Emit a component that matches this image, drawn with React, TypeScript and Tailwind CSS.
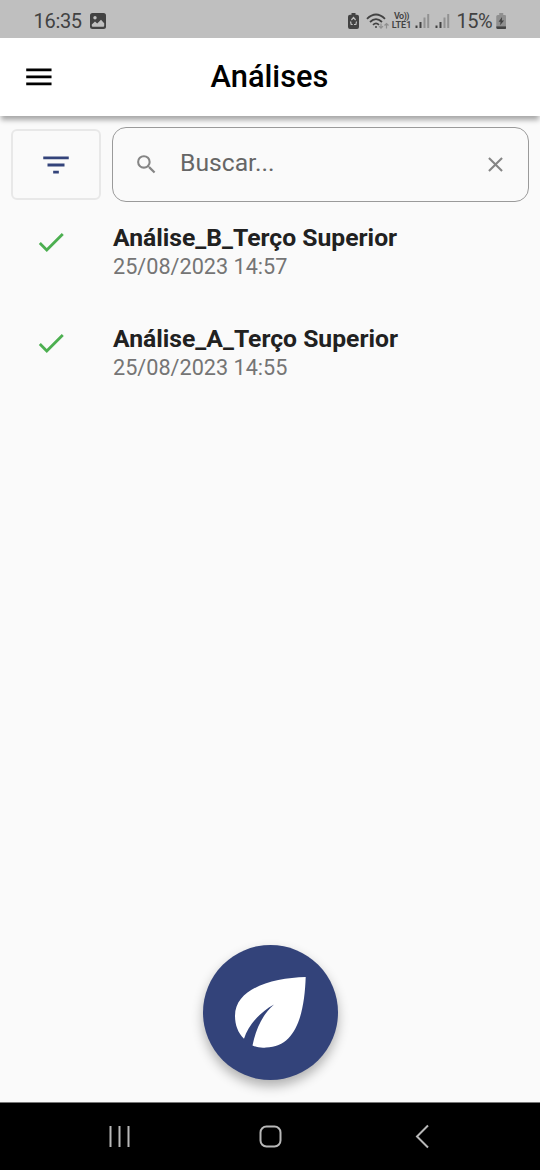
import React from 'react';

type Analysis = { name: string; date: string };

const analyses: Analysis[] = [
  { name: 'Análise_B_Terço Superior', date: '25/08/2023 14:57' },
  { name: 'Análise_A_Terço Superior', date: '25/08/2023 14:55' },
];

function Icon({ d, className }: { d: string; className: string }) {
  return (
    <svg viewBox="0 0 24 24" fill="currentColor" className={`shrink-0 ${className}`}>
      <path d={d} />
    </svg>
  );
}

function Signal() {
  return (
    <svg viewBox="0 0 15 16" className="h-4 w-[15px] shrink-0">
      <path d="M.5 12.5h2V15h-2z" fill="#424242" />
      <path d="M4.5 9h2v6h-2z" fill="#424242" />
      <path d="M8.5 4.5h2V15h-2zM12.2 1h2v14h-2z" fill="#929292" />
    </svg>
  );
}

function StatusBar() {
  return (
    <div className="flex h-[38px] items-center bg-[#bfbfbf] pb-[1px] pl-[33.5px] pt-[5px] text-[#424242]">
      <span className="w-[50px] text-[20px] leading-none tracking-[-0.3px]">16:35</span>
      <svg viewBox="0 0 16 16" className="ml-[6px] h-4 w-4">
        <rect width="16" height="16" rx="2.5" fill="#424242" />
        <path d="M1.8 11.5 5 8.4l2.2 2.1L11 6.8l3.2 3.4v2.6q0 1-1 1H2.8q-1 0-1-1z" fill="#bfbfbf" />
        <circle cx="5" cy="4.7" r="1.7" fill="#bfbfbf" />
      </svg>
      <svg viewBox="0 0 11 16" className="ml-[242px] h-4 w-[11px] shrink-0">
        <path d="M3.5 0h4v1.7H9q2 0 2 2V14q0 2-2 2H2q-2 0-2-2V3.7q0-2 2-2h1.5z" fill="#424242" />
        <path d="M3.4 7 5.5 4.5 7.6 7M8.5 8.5 7.9 11.5H6M2.5 8.5l.7 3h1.5" fill="none" stroke="#bfbfbf" strokeWidth="1.2" />
      </svg>
      <svg viewBox="0 0 23 17" className="ml-[7px] h-[17px] w-[23px] shrink-0" fill="none" stroke="#424242" strokeWidth="1.8">
        <path d="M1 5.8Q10 -2.8 19 5.8M4 9Q10 3.3 16 9M7 11.8Q10 9 13 11.8" />
        <circle cx="10" cy="14" r="1" fill="#424242" stroke="none" />
        <path d="M15 10.5v4.5m-2-1.8 2 2 2-2M20.5 15.5V10.5m-2 2 2-2 2 2" stroke="#8f8f8f" strokeWidth="1.2" />
      </svg>
      <div className="ml-[3px] flex w-[20px] shrink-0 flex-col items-center whitespace-nowrap text-[9px] font-semibold leading-[9px]">
        <span className="tracking-[-0.5px]">Vo))</span>
        <span>LTE1</span>
      </div>
      <div className="ml-[3px] flex gap-[5px]">
        <Signal />
        <Signal />
      </div>
      <span className="ml-[7px] w-[37px] text-[20px] leading-none tracking-[-0.5px]">15%</span>
      <svg viewBox="0 0 10 16" className="ml-[2px] h-4 w-[10.5px] shrink-0">
        <path d="M3 0h4v2h1.5Q10 2 10 3.5V13H0V3.5Q0 2 1.5 2H3z" fill="#8f8f8f" />
        <path d="M0 13.3h10v1.2q0 1.5-1.5 1.5h-7Q0 16 0 14.5z" fill="#424242" />
        <path d="M5.8 4 2.3 8.8h2L3.9 12.3 7.8 7.4H5.6z" fill="#424242" />
      </svg>
    </div>
  );
}

export default function App() {
  return (
    <div className="flex h-[1170px] w-[540px] flex-col overflow-hidden bg-[#fafafa] font-['Roboto',sans-serif]">
      <StatusBar />
      <header className="z-10 grid h-[78px] grid-cols-[78px_1fr_78px] items-center bg-white shadow-[0_5px_5px_-1px_rgba(0,0,0,0.33)]">
        <Icon d="M3 18h18v-2H3v2zm0-5h18v-2H3v2zm0-7v2h18V6H3z" className="ml-[22.4px] size-[33.75px] text-black" />
        <h1 className="pb-[1px] pr-[1px] text-center text-[30.8px] font-medium leading-9 text-black">Análises</h1>
      </header>
      <main className="flex flex-1 flex-col">
        <div className="flex gap-[11px] pl-[11px] pt-[11px]">
          <button className="mt-[2px] flex h-[71px] w-[90px] items-center justify-center rounded-[6px] border-2 border-[#e8e8e8]">
            <Icon d="M10 18h4v-2h-4v2zM3 6v2h18V6H3zm3 7h12v-2H6v2z" className="size-[34px] text-[#33437a]" />
          </button>
          <div className="flex h-[75px] w-[416.5px] items-center rounded-[14px] border-[1.5px] border-[#9a9a9a] pl-[20.5px] pr-[20px] text-[#858585]">
            <Icon d="M15.5 14h-.79l-.28-.27A6.471 6.471 0 0 0 16 9.5 6.5 6.5 0 1 0 9.5 16c1.61 0 3.09-.59 4.23-1.57l.27.28v.79l5 4.99L20.49 19l-4.99-5zm-6 0C7.01 14 5 11.99 5 9.5S7.01 5 9.5 5 14 7.01 14 9.5 11.99 14 9.5 14z" className="size-[25px]" />
            <span className="mb-[3px] ml-[21.5px] flex-1 text-[24.7px] leading-8 text-[#666]">Buscar...</span>
            <Icon d="M19 6.41 17.59 5 12 10.59 6.41 5 5 6.41 10.59 12 5 17.59 6.41 19 12 13.41 17.59 19 19 17.59 13.41 12z" className="size-[25px]" />
          </div>
        </div>
        <ul className="mt-[22px] flex flex-col gap-[43px]">
          {analyses.map((item) => (
            <li key={item.name} className="flex h-[58px]">
              <Icon d="M9 16.17 4.83 12l-1.42 1.41L9 19 21 7l-1.41-1.41z" className="ml-[34px] mt-[1px] size-[34px] text-[#4caf50]" />
              <div className="ml-[45px] flex flex-col whitespace-nowrap">
                <span className="text-[24.7px] font-bold leading-[28px] text-[#212121]">{item.name}</span>
                <span className="text-[21.65px] leading-[30px] text-[#757575]">{item.date}</span>
              </div>
            </li>
          ))}
        </ul>
        <button className="mx-auto mb-[22px] mt-auto size-[135px] rounded-full bg-[#33437a] shadow-[0_6px_12px_rgba(0,0,0,0.3)]">
          <svg viewBox="0 0 135 135" className="size-full" fill="white">
            <path d="M102.7 32C70 33 32 43 32 71C32 80 35 88 41 93.7C45 82 54 69 71 59.5C60 69 53 83 49.5 100.5C54 102.5 59 103 63 102.5C94 102 101.5 67 102.7 32Z" />
          </svg>
        </button>
      </main>
      <nav className="flex h-[68px] items-center border-t border-[#777] bg-black">
        <svg viewBox="0 0 540 67" className="h-[67px] w-full" fill="none" stroke="#b8b8b8" strokeWidth="2">
          <path d="M110.5 23v21M119.5 23v21M128.5 23v21" />
          <rect x="260.5" y="23.5" width="20" height="20" rx="6" />
          <path d="m428 22.5-11 11 11 11" />
        </svg>
      </nav>
    </div>
  );
}
